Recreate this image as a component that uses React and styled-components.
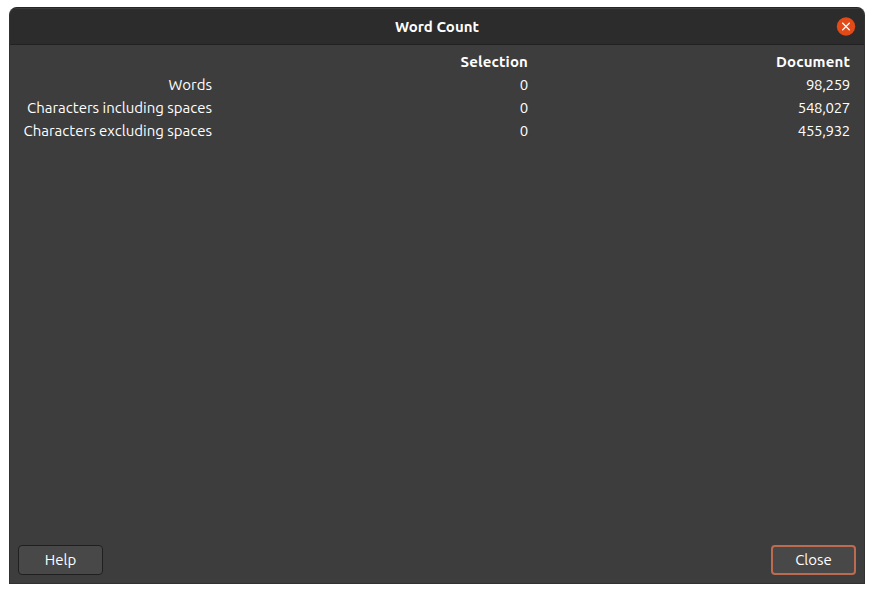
import React from 'react';
import styled, { createGlobalStyle } from 'styled-components';

const GlobalStyle = createGlobalStyle`
  * { box-sizing: border-box; }
  body { margin: 0; background: #ffffff; }
`;

const Desktop = styled.div`
  height: 593px;
  padding: 7px 9px 9px;
  overflow: hidden;
  background: #ffffff;
`;

const Dialog = styled.section`
  display: flex;
  flex-direction: column;
  height: 577px;
  overflow: hidden;
  border: 1px solid #313131;
  border-top-color: #252525;
  border-radius: 8px 8px 0 0;
  background: #3d3d3d;
  color: #ffffff;
  font: 15px/23px Ubuntu, "Noto Sans", sans-serif;
`;

const TitleBar = styled.header`
  display: grid;
  grid-template-columns: 1fr auto 1fr;
  align-items: center;
  flex: none;
  height: 37px;
  padding: 0 9px;
  border-top: 1px solid #3b3b3b;
  border-bottom: 1px solid #222222;
  background: #2c2c2c;
`;

const Title = styled.h1`
  grid-column: 2;
  margin: 0;
  font-size: 15px;
  font-weight: 700;
  line-height: 20px;
`;

const CloseIconButton = styled.button`
  justify-self: end;
  width: 19px;
  height: 19px;
  margin-top: -1px;
  padding: 0;
  border: 0;
  background: transparent;

  svg { display: block; }
`;

const Stats = styled.div`
  display: grid;
  grid-template-columns: 202px 316px 322px;
  grid-auto-rows: 23px;
  flex: 1;
  align-content: start;
  padding-top: 5px;
  text-align: right;
`;

const Cell = styled.span`
  white-space: nowrap;
`;

const NumberCell = styled(Cell)`
  letter-spacing: -0.33px;
`;

const HeadCell = styled(Cell)`
  font-weight: 700;
  letter-spacing: 0.15px;
`;

const Actions = styled.footer`
  display: flex;
  justify-content: space-between;
  padding: 0 8px;
  margin-bottom: 8px;
`;

const Button = styled.button`
  width: 85px;
  height: 30px;
  padding: 0;
  border: ${(p) => (p.$focused ? '2px solid #bd6b50' : '1px solid #202020')};
  border-radius: 4px;
  background: #484848;
  color: inherit;
  font: inherit;
  line-height: 26px;
`;

const rows = [
  ['Words', '0', '98,259'],
  ['Characters including spaces', '0', '548,027'],
  ['Characters excluding spaces', '0', '455,932'],
];

export default function App() {
  return (
    <>
      <GlobalStyle />
      <Desktop>
        <Dialog>
          <TitleBar>
            <Title>Word Count</Title>
            <CloseIconButton aria-label="Close window">
              <svg width="19" height="19" viewBox="0 0 19 19" overflow="visible">
                <circle cx="10" cy="9.5" r="9.2" fill="#e24a18" />
                <path d="M6.3 5.8l7.4 7.4M13.7 5.8l-7.4 7.4" stroke="#fff" strokeWidth="1.3" />
              </svg>
            </CloseIconButton>
          </TitleBar>
          <Stats>
            <span />
            <HeadCell>Selection</HeadCell>
            <HeadCell>Document</HeadCell>
            {rows.map(([label, selection, total]) => (
              <React.Fragment key={label}>
                <Cell>{label}</Cell>
                <NumberCell>{selection}</NumberCell>
                <NumberCell>{total}</NumberCell>
              </React.Fragment>
            ))}
          </Stats>
          <Actions>
            <Button>Help</Button>
            <Button $focused>Close</Button>
          </Actions>
        </Dialog>
      </Desktop>
    </>
  );
}
